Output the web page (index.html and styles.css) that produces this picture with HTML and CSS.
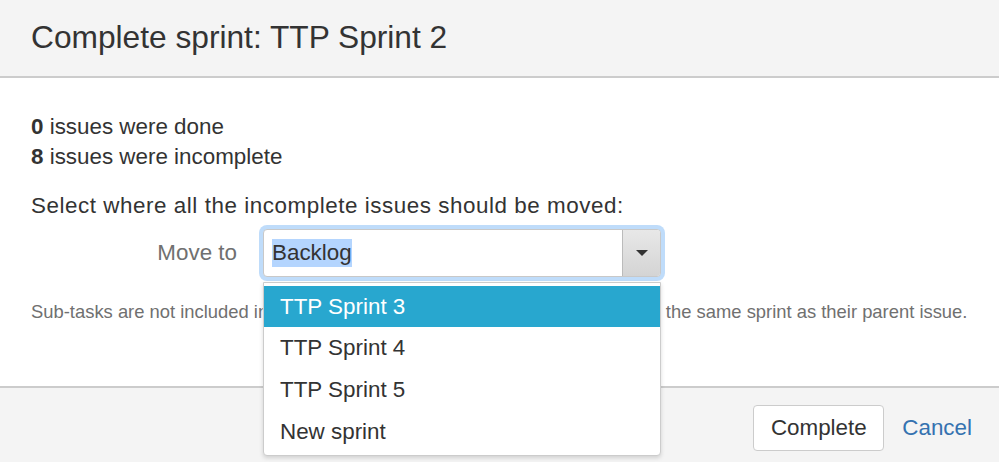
FILE: index.html
```html
<!DOCTYPE html>
<html>
<head>
<meta charset="utf-8">
<link rel="stylesheet" href="styles.css">
</head>
<body>
<div class="dialog">
  <header class="dialog-header">
    <h1 class="dialog-title">Complete sprint: TTP Sprint 2</h1>
  </header>
  <main class="dialog-body">
    <p class="stat"><strong>0</strong> issues were done</p>
    <p class="stat"><strong>8</strong> issues were incomplete</p>
    <p class="instruction">Select where all the incomplete issues should be moved:</p>
    <div class="field-row">
      <label class="field-label">Move to</label>
      <div class="select-wrap">
        <div class="select">
          <span class="select-value"><span class="selected-text">Backlog</span></span>
          <span class="select-arrow"><span class="triangle"></span></span>
        </div>
        <ul class="dropdown">
          <li class="option active">TTP Sprint 3</li>
          <li class="option">TTP Sprint 4</li>
          <li class="option">TTP Sprint 5</li>
          <li class="option">New sprint</li>
        </ul>
      </div>
    </div>
    <p class="note">Sub-tasks are not included in the total above, and they are always included in the same sprint as their parent issue.</p>
  </main>
  <footer class="dialog-footer">
    <button class="btn">Complete</button>
    <a class="link" href="#">Cancel</a>
  </footer>
</div>
</body>
</html>
```

FILE: styles.css
```css
* { box-sizing: border-box; }
html, body { margin: 0; padding: 0; }
body {
  font-family: "Liberation Sans", Arial, sans-serif;
  color: #333;
  background: #fff;
  width: 999px;
  height: 462px;
  overflow: hidden;
}
.dialog { display: flex; flex-direction: column; height: 462px; }
.dialog-header {
  height: 78px;
  background: #f4f4f4;
  border-bottom: 2px solid #cccccc;
  display: flex;
  align-items: center;
  padding-left: 31px;
}
.dialog-title {
  margin: 0 0 2px 0;
  font-size: 31.7px;
  font-weight: normal;
  color: #333;
}
.dialog-body {
  flex: 1;
  padding: 34px 31px 0 31px;
  position: relative;
}
.stat { margin: 0; font-size: 22.4px; line-height: 30px; }
.instruction { margin: 19px 0 0 0; font-size: 22.4px; line-height: 30px; letter-spacing: 0.55px; }
.field-row {
  display: flex;
  align-items: center;
  margin-top: 8px;
}
.field-label {
  width: 232px;
  text-align: right;
  padding-right: 26px;
  font-size: 22.4px;
  color: #707070;
}
.select-wrap { position: relative; }
.select {
  width: 398px;
  height: 48px;
  border: 1px solid #c8c8c8;
  border-radius: 4px;
  box-shadow: 0 0 0 4px #bfdcfa;
  display: flex;
  background: #fff;
  overflow: hidden;
}
.select-value {
  flex: 1;
  display: flex;
  align-items: center;
  padding-left: 8px;
  font-size: 22.4px;
  color: #333;
}
.selected-text { background: #b4d5fe; line-height: 28px; }
.select-arrow {
  width: 38px;
  background: linear-gradient(#e8e8e8, #d4d4d4);
  border-left: 1px solid #bbb;
  display: flex;
  align-items: center;
  justify-content: center;
}
.triangle {
  width: 0; height: 0;
  border-left: 6px solid transparent;
  border-right: 6px solid transparent;
  border-top: 6px solid #333;
}
.dropdown {
  position: absolute;
  left: 0;
  top: 53px;
  width: 398px;
  margin: 0;
  padding: 3px 0 2px 0;
  list-style: none;
  background: #fff;
  border: 1px solid #ccc;
  border-radius: 0 0 4px 4px;
  box-shadow: 0 2px 4px rgba(0,0,0,0.15);
  z-index: 5;
}
.option {
  height: 42px;
  line-height: 42px;
  padding-left: 16px;
  font-size: 22.4px;
  color: #333;
}
.option.active { height: 41px; line-height: 41px; background: #28a7cf; color: #fff; }
.note {
  margin: 23px 0 0 0;
  font-size: 18.4px;
  color: #707070;
  line-height: 24px;
  white-space: nowrap;
}
.dialog-footer {
  height: 76px;
  background: #f4f4f4;
  border-top: 2px solid #cccccc;
  display: flex;
  align-items: center;
  justify-content: flex-end;
  padding-right: 27px;
}
.btn {
  font-family: inherit;
  font-size: 22.4px;
  color: #333;
  background: #fff;
  border: 1px solid #ccc;
  border-radius: 4px;
  height: 46px;
  width: 131px;
  margin-right: 18px;
  margin-top: 6px;
}
.link {
  font-size: 22.4px;
  color: #3572b0;
  text-decoration: none;
  margin-top: 6px;
}
```
